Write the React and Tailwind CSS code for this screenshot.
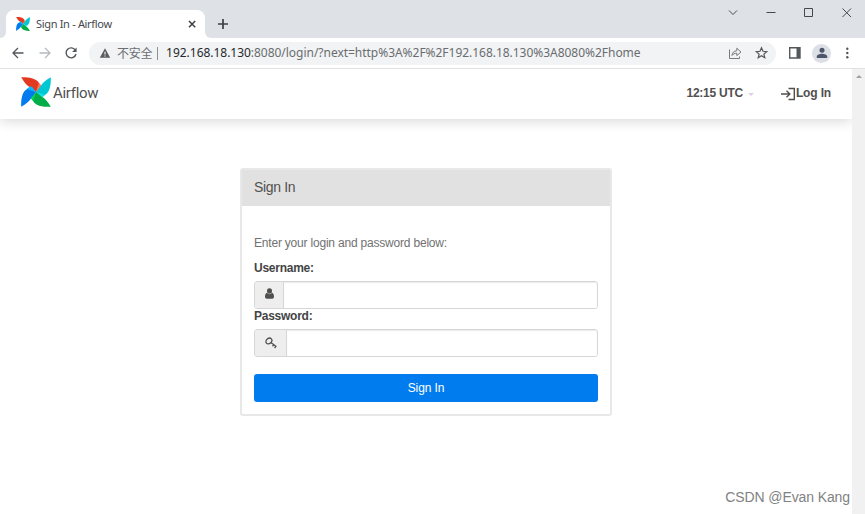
import React from 'react';

const BLADES = [
  { angle: 0, color: '#e43921', light: '#ff7557' },
  { angle: 90, color: '#00c7d4', light: '#11e1ee' },
  { angle: 180, color: '#00ad46', light: '#04d659' },
  { angle: 270, color: '#017cee', light: '#0cb6ff' },
];

const Pinwheel = ({ className }) => (
  <svg viewBox="0 0 30 30" className={className}>
    {BLADES.map(blade => (
      <g key={blade.angle} transform={`rotate(${blade.angle} 15 15)`}>
        <path d="M0.2 0.2C8 0 14 1.2 17 4.6C18.4 6.4 18.6 8 18 9.5L15 15L9.5 10.6C5.5 8.5 3 5 0.2 0.2Z" fill={blade.color} />
        <path d="M15 15L17.9 5.8C19.8 7.5 20.8 9.6 20.3 11Z" fill={blade.light} />
      </g>
    ))}
    <circle cx="15" cy="15" r="0.5" fill="#51504f" />
  </svg>
);

const Icon = ({ className, children, viewBox = '0 0 16 16' }) => (
  <svg viewBox={viewBox} className={className} fill="none" stroke="currentColor" strokeWidth="1.3">
    {children}
  </svg>
);

const TabStrip = () => (
  <div className="flex h-[38px] items-start bg-[#dee1e6]">
    <div className="h-[38px] w-1.5 bg-white">
      <div className="h-full rounded-br-md bg-[#dee1e6]"></div>
    </div>
    <div className="mt-[10px] flex h-7 w-[199px] items-center rounded-t-lg bg-white pl-[10px] pr-2">
      <Pinwheel className="h-[14px] w-[14px]" />
      <span className="ml-[6px] flex-1 whitespace-nowrap font-['Noto_Sans',sans-serif] text-[11px] tracking-[-0.32px] text-[#45494d]">Sign In - Airflow</span>
      <Icon className="h-[10px] w-[10px] text-[#3c4043]" viewBox="0 0 10 10">
        <path d="M2 2L8.2 8.2M8.2 2L2 8.2" strokeWidth="1.5" />
      </Icon>
    </div>
    <div className="h-[38px] w-1.5 bg-white">
      <div className="h-full rounded-bl-md bg-[#dee1e6]"></div>
    </div>
    <Icon className="ml-[6px] mt-[18px] h-3 w-3 text-[#3c4043]" viewBox="0 0 12 12">
      <path d="M6 1V11M1 6H11" strokeWidth="1.7" />
    </Icon>
    <div className="ml-auto flex pt-[7px] text-[#45484c]">
      <Icon className="mr-[25px] h-3 w-3" viewBox="0 0 12 12">
        <path d="M1 3.5L5 7.5L9 3.5" strokeWidth="1" />
      </Icon>
      <Icon className="mr-[26px] h-3 w-3" viewBox="0 0 12 12">
        <path d="M1.5 5.5H10.5" strokeWidth="1" />
      </Icon>
      <Icon className="mr-[26px] h-3 w-3" viewBox="0 0 12 12">
        <path d="M1.5 1.5H9.5V9.5H1.5Z" strokeWidth="1" />
      </Icon>
      <Icon className="mr-[12px] h-3 w-3" viewBox="0 0 12 12">
        <path d="M1.5 1.5L10 10M10 1.5L1.5 10" strokeWidth="1" />
      </Icon>
    </div>
  </div>
);

const Toolbar = () => (
  <div className="flex h-[31px] items-center border-b border-[#e1e2e4] bg-white pl-[10px] text-[#54585c]">
    <Icon className="h-4 w-4">
      <path d="M13.5 8H3M8 3L3 8L8 13" />
    </Icon>
    <Icon className="ml-[11px] h-4 w-4 text-[#b7babd]">
      <path d="M2.5 8H13M8 3L13 8L8 13" />
    </Icon>
    <Icon className="ml-[10px] h-4 w-4">
      <path d="M12.5 5.4A5 5 0 1 0 13 9" strokeWidth="1.4" />
      <path d="M13.6 2.5V7H9.1Z" fill="currentColor" stroke="none" />
    </Icon>
    <div className="ml-[10px] flex h-[23px] w-[687px] items-center rounded-full bg-[#f1f3f4] pl-[10px] pr-[8px]">
      <svg viewBox="0 0 12 12" className="h-3 w-3" fill="#5a5e62">
        <path fillRule="evenodd" d="M6 1.2L11.2 10.8H0.8ZM5.4 4.7V7.6H6.6V4.7ZM5.4 8.4V9.6H6.6V8.4Z" />
      </svg>
      <span className="ml-[6px] whitespace-nowrap font-['Noto_Sans_CJK_SC',sans-serif] text-[12px] tracking-[-0.3px] text-[#6b6f73]">不安全</span>
      <span className="ml-[5px] h-[13px] w-px bg-[#8e9194]"></span>
      <span className="ml-[8px] flex-1 whitespace-nowrap font-['Noto_Sans',sans-serif] text-[12px] tracking-[-0.03px] text-[#6a6d70]">
        <span className="text-[#27292c]">192.168.18.130</span>:8080/login/?next=http%3A%2F%2F192.168.18.130%3A8080%2Fhome
      </span>
      <Icon className="h-[14px] w-[14px] text-[#777a7e]" viewBox="0 0 14 14">
        <path d="M1.5 3.5V12.5H11.5V10.5M4 9.5C4.4 6.2 6 4.9 8.8 4.8V2.2L13 6L8.8 9.6V7.2C6.5 7.2 5.2 7.9 4 9.5Z" strokeWidth="1" />
      </Icon>
      <Icon className="ml-[12px] h-[14px] w-[14px]" viewBox="0 0 14 14">
        <path d="M7.5 1.8L9 5.3L12.7 5.7L9.9 8.1L10.8 11.8L7.5 9.8L4.2 11.8L5.1 8.1L2.3 5.7L6 5.3Z" strokeWidth="1.2" />
      </Icon>
    </div>
    <Icon className="ml-[12px] h-[14px] w-[14px]" viewBox="0 0 14 14">
      <path d="M1.7 1.7H12V12H1.7Z" strokeWidth="1.4" />
      <path d="M8.5 1.5H12V12H8.5Z" fill="currentColor" stroke="none" />
    </Icon>
    <div className="ml-[10px] flex h-[19px] w-[19px] items-center justify-center rounded-full bg-[#dcdfe6]">
      <svg viewBox="0 0 12 12" className="h-3 w-3" fill="#4b5669">
        <circle cx="6" cy="3.2" r="2.5" />
        <path d="M0.8 11V9.6C0.8 7.8 3.8 6.8 6 6.8S11.2 7.8 11.2 9.6V11Z" />
      </svg>
    </div>
    <svg viewBox="0 0 4 12" className="ml-[14px] h-3 w-1" fill="#54585c">
      <circle cx="2.3" cy="1.7" r="1.2" />
      <circle cx="2.3" cy="6" r="1.2" />
      <circle cx="2.3" cy="10.3" r="1.2" />
    </svg>
  </div>
);

const Navbar = () => (
  <nav className="flex h-[50px] shrink-0 items-center bg-white pl-[21px] pr-[21px] text-[#51504f] shadow-[0_2px_12px_rgba(0,0,0,0.16)]">
    <Pinwheel className="mt-[-4px] h-[30px] w-[30px]" />
    <span className="ml-[2px] mt-[-1px] font-['Roboto',sans-serif] text-[15px] tracking-[-0.3px]">Airflow</span>
    <span className="ml-auto mt-[-2px] text-[12px] font-bold tracking-[-0.25px]">12:15 UTC</span>
    <span className="ml-[5px] border-x-[3px] border-t-[3px] border-x-transparent border-t-[#e0d0e6]"></span>
    <Icon className="ml-[26px] mt-[-1px] h-4 w-4" viewBox="0 0 16 16">
      <path d="M1 8H10M6.5 4.8L9.8 8L6.5 11.2M8.5 2.5H14.3V13.5H8.5" strokeWidth="1.4" />
    </Icon>
    <span className="mt-[-2px] text-[12px] font-bold tracking-[-0.15px]">Log In</span>
  </nav>
);

const UserIcon = () => (
  <svg viewBox="0 0 10 12" className="h-[11px] w-[9px]" fill="#51504f">
    <ellipse cx="5" cy="3.3" rx="2.8" ry="3.1" />
    <path d="M2.2 5.3C0.7 5.8 0 7.5 0 9.5C0 10.9 0.8 11.7 2 11.7H8C9.2 11.7 10 10.9 10 9.5C10 7.5 9.3 5.8 7.8 5.3C6.5 7.4 3.5 7.4 2.2 5.3Z" />
  </svg>
);

const KeyIcon = () => (
  <svg viewBox="0 0 12 12" className="h-3 w-3" fill="none" stroke="#51504f">
    <ellipse cx="3.9" cy="4" rx="3.2" ry="2.5" strokeWidth="1.3" transform="rotate(-40 3.9 4)" />
    <path d="M5.8 5.5L11.2 9.6M7.6 9.3L9 7.3M9.6 11.1L11.3 8.9" strokeWidth="1.3" />
  </svg>
);

const Field = ({ label, type, icon, addonClass }) => (
  <>
    <label className="block h-[20px] text-[12px] font-bold leading-[14px] tracking-[-0.25px] text-[#444]">{label}</label>
    <div className="flex h-7 rounded-[3px] border border-[#d6d6d6]">
      <span className={`flex items-center justify-center rounded-l-[2px] border-r border-[#d6d6d6] bg-[#eee] ${addonClass}`}>{icon}</span>
      <input type={type} className="min-w-0 flex-1 rounded-r-[2px] bg-white shadow-[inset_0_1px_1px_rgba(0,0,0,0.08)] outline-none" />
    </div>
  </>
);

const LoginPanel = () => (
  <div className="ml-[240px] mt-[49px] h-[248px] w-[372px] rounded-[3px] border-2 border-[#e8e8e8] bg-white">
    <div className="flex h-9 items-center bg-[#e1e1e1] pb-0.5 pl-3 text-[14px] leading-none tracking-[-0.35px] text-[#51504f]">Sign In</div>
    <form className="px-3 pt-[29px]">
      <p className="mb-[10px] text-[12px] leading-[16px] tracking-[-0.2px] text-[#717171]">Enter your login and password below:</p>
      <Field label="Username:" type="text" icon={<UserIcon />} addonClass="w-[29px] pb-[3px]" />
      <Field label="Password:" type="password" icon={<KeyIcon />} addonClass="w-[32px] pb-px" />
      <button type="button" className="mt-[17px] block h-[28px] w-full rounded-[3px] bg-[#017cee] pb-px text-[12px] tracking-[-0.1px] text-white">Sign In</button>
    </form>
  </div>
);

const App = () => (
  <div className="flex h-[514px] w-[865px] flex-col overflow-hidden bg-white font-['Liberation_Sans',sans-serif]">
    <TabStrip />
    <Toolbar />
    <div className="flex flex-1">
      <main className="relative flex w-[852px] flex-col overflow-hidden">
        <Navbar />
        <LoginPanel />
        <span className="absolute bottom-[6px] right-[2px] whitespace-nowrap font-['Liberation_Sans',sans-serif] text-[14px] tracking-[-0.1px] text-[#828282]">CSDN @Evan Kang</span>
      </main>
      <div className="flex w-[13px] justify-center bg-[#f1f1f1] pt-[6px]">
        <span className="h-0 border-x-[3px] border-b-[3px] border-x-transparent border-b-[#a0a0a0]"></span>
      </div>
    </div>
  </div>
);

export default App;
